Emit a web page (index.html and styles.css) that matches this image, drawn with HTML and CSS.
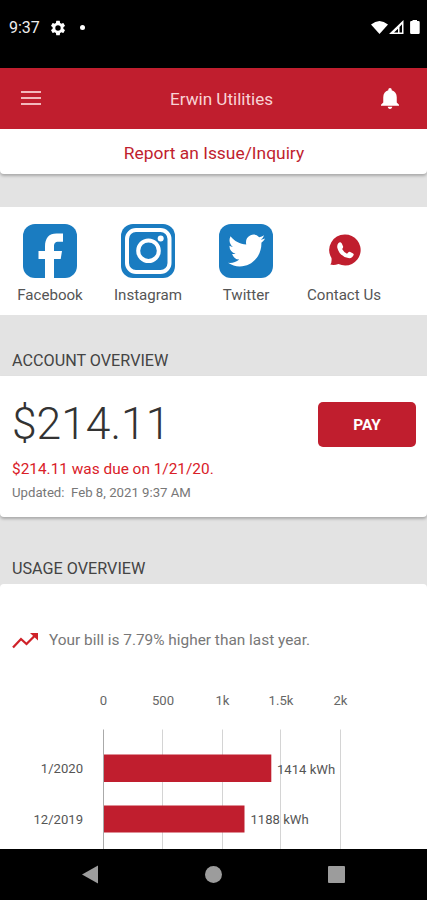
FILE: index.html
```
<!DOCTYPE html>
<html lang="en">
<head>
  <meta charset="UTF-8">
  <meta name="viewport" content="width=device-width, initial-scale=1.0">
  <title>Erwin Utilities</title>
  <link rel="stylesheet" href="styles.css">
</head>
<body>
  <div class="status-bar">
    <span class="status-bar__time">9:37</span>
    <svg class="status-bar__gear" width="18" height="18" viewBox="0 0 24 24" fill="#fff"><path d="M19.14 12.94c.04-.3.06-.61.06-.94s-.02-.64-.07-.94l2.03-1.58a.49.49 0 0 0 .12-.61l-1.92-3.32a.49.49 0 0 0-.59-.22l-2.39.96c-.5-.38-1.03-.7-1.62-.94l-.36-2.54a.48.48 0 0 0-.48-.41h-3.84a.47.47 0 0 0-.47.41l-.36 2.54c-.59.24-1.13.57-1.62.94l-2.39-.96a.48.48 0 0 0-.59.22L2.74 8.87c-.12.21-.08.47.12.61l2.03 1.58c-.05.3-.09.63-.09.94s.02.64.07.94l-2.03 1.58a.49.49 0 0 0-.12.61l1.92 3.32c.12.22.37.29.59.22l2.39-.96c.5.38 1.03.7 1.62.94l.36 2.54c.05.24.24.41.48.41h3.84c.24 0 .44-.17.47-.41l.36-2.54c.59-.24 1.13-.56 1.62-.94l2.39.96c.22.08.47 0 .59-.22l1.92-3.32a.48.48 0 0 0-.12-.61zM12 15.6a3.6 3.6 0 1 1 0-7.2 3.6 3.6 0 0 1 0 7.2z"/></svg>
    <span class="status-bar__dot"></span>
    <svg class="status-bar__signal" width="50" height="16" viewBox="0 0 50 16" fill="#fff">
      <path d="M0 4.500Q8.500-2.500 17 4.500L8.500 14z"/>
      <path fill-rule="evenodd" d="M32.500 0v14H18zM31 4.200V12.500H28.500V7zM27 8.700V12.500H23z"/>
      <path d="M41.500 1.100V0h4.500v1.100h1.500q1.200 0 1.200 1.200V12.800q0 1.200-1.200 1.200h-7.200q-1.200 0-1.200-1.200V2.300q0-1.200 1.200-1.200z"/>
    </svg>
  </div>

  <header class="header">
    <div class="header__menu"><span></span><span></span><span></span></div>
    <div class="header__title">Erwin Utilities</div>
    <svg class="header__bell" width="18" height="21" viewBox="4 2.500 16 19.500" preserveAspectRatio="none" fill="#fff"><path d="M12 22c1.100 0 2-.9 2-2h-4c0 1.100.9 2 2 2zm6-6v-5c0-3.070-1.640-5.640-4.500-6.320V4a1.500 1.500 0 0 0-3 0v.68C7.630 5.360 6 7.920 6 11v5l-2 2v1h16v-1z"/></svg>
  </header>

  <main class="content">
    <a class="card report">Report an Issue/Inquiry</a>

    <nav class="social">
      <a class="social__item">
        <svg width="54" height="54" viewBox="0 0 54 54">
          <rect width="54" height="54" rx="12" fill="#1a7cc1"/>
          <path fill="#fff" d="M22 54V35h-6.500v-8H22v-4.500C22 14 26 9.500 33.500 9.500H40v8.300h-4.500c-3.500 0-4.500 1.700-4.500 4.700V27h8l-1.300 8H31v19z"/>
        </svg>
        <span>Facebook</span>
      </a>
      <a class="social__item">
        <svg width="54" height="54" viewBox="0 0 54 54" fill="none" stroke="#fff">
          <rect width="54" height="54" rx="12" fill="#1a7cc1" stroke="none"/>
          <rect x="6" y="6" width="42.500" height="42" rx="9" stroke-width="4"/>
          <circle cx="27.500" cy="26.700" r="10.300" stroke-width="4"/>
          <circle cx="39.700" cy="14.500" r="3" fill="#fff" stroke="none"/>
        </svg>
        <span>Instagram</span>
      </a>
      <a class="social__item">
        <svg width="54" height="54" viewBox="0 0 54 54">
          <rect width="54" height="54" rx="12" fill="#1a7cc1"/>
          <path fill="#fff" transform="translate(9 7) scale(1.550 1.630)" d="M23.950 4.570a10 10 0 0 1-2.820.77 4.960 4.960 0 0 0 2.160-2.720c-.95.550-2 .950-3.130 1.180a4.920 4.920 0 0 0-8.380 4.480C7.690 8.090 4.070 6.130 1.640 3.160a4.820 4.820 0 0 0-.670 2.480c0 1.710.87 3.210 2.190 4.100a4.900 4.900 0 0 1-2.230-.62v.06a4.920 4.920 0 0 0 3.950 4.830 5 5 0 0 1-2.210.08 4.940 4.940 0 0 0 4.600 3.420A9.870 9.870 0 0 1 0 19.540a13.990 13.990 0 0 0 7.550 2.210c9.050 0 14-7.500 14-13.980 0-.21 0-.42-.02-.63a9.940 9.940 0 0 0 2.460-2.550z"/>
        </svg>
        <span>Twitter</span>
      </a>
      <a class="social__item">
        <svg width="54" height="54" viewBox="0 0 54 54">
          <path fill="#c01e2e" d="M28 10.500A15.500 15.500 0 1 1 21.500 40Q17 41.500 13.300 40.500Q15 38.500 14.500 34A15.500 15.500 0 0 1 28 10.500z"/>
          <path fill="#fff" d="M21.300 19.300q2-2 3.500.3l1.300 2.900q.3 1.200-1 2.500 1.600 3.100 4.900 4.700l1.700-1.600q.8-.6 1.600-.2l2.800 1.600q.9.500.5 1.600-1.400 3.700-5.300 3-8.900-2-11-10.300-.4-2.800 1-4.500z"/>
        </svg>
        <span>Contact Us</span>
      </a>
    </nav>

    <h2 class="heading">ACCOUNT OVERVIEW</h2>
    <section class="card account">
      <div>
        <div class="account__amount">$214.11</div>
        <div class="account__due">$214.11 was due on 1/21/20.</div>
        <div class="account__updated">Updated:&nbsp; Feb 8, 2021 9:37 AM</div>
      </div>
      <button class="account__pay">PAY</button>
    </section>

    <h2 class="heading heading--usage">USAGE OVERVIEW</h2>
    <section class="usage">
      <div class="usage__trend">
        <svg width="27" height="17" viewBox="0 0 27 17"><path d="M1 15.500L9 7l5.500 5L23 3.500" fill="none" stroke="#cf2229" stroke-width="2.300"/><path d="M18 1h8v7.500z" fill="#cf2229"/></svg>
        <span>Your bill is 7.79% higher than last year.</span>
      </div>
      <svg class="chart" width="427" height="169" viewBox="0 680 427 169">
        <g class="chart__axis">
          <text x="103.500" y="705">0</text>
          <text x="163" y="705">500</text>
          <text x="222.500" y="705">1k</text>
          <text x="281" y="705">1.5k</text>
          <text x="340.500" y="705">2k</text>
        </g>
        <path class="chart__grid" d="M162.500 729.500V849M222.500 729.500V849M280.500 729.500V849M340.500 729.500V849"/>
        <path class="chart__base" d="M103.500 729.500V849"/>
        <rect class="chart__bar" x="104" y="754.500" width="167.300" height="27.500"/>
        <rect class="chart__bar" x="104" y="805.500" width="140.500" height="27"/>
        <g class="chart__label">
          <text x="83" y="773" text-anchor="end">1/2020</text>
          <text x="83" y="823.500" text-anchor="end">12/2019</text>
          <text x="277" y="773.500">1414 kWh</text>
          <text x="250.500" y="823.500">1188 kWh</text>
        </g>
      </svg>
    </section>
  </main>

  <footer class="nav-bar">
    <svg width="17" height="19" viewBox="0 0 17 19"><path d="M0 9.500L16 .500v18z" fill="#9c9c9c"/></svg>
    <span class="nav-bar__home"></span>
    <span class="nav-bar__recent"></span>
  </footer>
</body>
</html>
```
FILE: styles.css
```
:root {
  --red: #c01e2e;
  --gray: #e3e3e3;
}

* {
  box-sizing: border-box;
}

body {
  display: flex;
  flex-direction: column;
  margin: 0;
  height: 900px;
  overflow: hidden;
  background: black;
  color: #555;
  font-family: Roboto, sans-serif;
}

svg {
  display: block;
}

.status-bar {
  display: flex;
  align-items: center;
  flex: none;
  height: 68px;
  padding: 0 6px 13px 9px;
  color: #eee;
}

.status-bar__time {
  width: 40px;
  font-size: 16px;
}

.status-bar__dot {
  width: 5px;
  height: 5px;
  margin-left: 13px;
  border-radius: 50%;
  background: white;
}

.status-bar__signal {
  margin-left: auto;
}

.header {
  display: flex;
  align-items: center;
  flex: none;
  height: 61px;
  padding: 0 28px 0 21px;
  background: var(--red);
}

.header__menu {
  display: flex;
  flex-direction: column;
  gap: 4px;
  padding-bottom: 2px;
}

.header__menu span {
  width: 20px;
  height: 2px;
  background: #f3b9bd;
}

.header__title {
  margin-left: 129px;
  color: #f8d3d5;
  font-size: 17.1px;
}

.header__bell {
  margin-left: auto;
}

.content {
  flex: 1;
  overflow: hidden;
  background: var(--gray);
}

.card {
  background: white;
  border-radius: 0 0 4px 4px;
  box-shadow: 0 2px 3px rgba(0, 0, 0, 0.25);
}

.report {
  display: block;
  height: 45px;
  padding-left: 1px;
  color: var(--red);
  font-size: 17.4px;
  line-height: 48px;
  text-align: center;
}

.social {
  display: flex;
  height: 108px;
  margin-top: 33px;
  padding: 17px 0 0 1px;
  background: white;
}

.social__item {
  display: flex;
  flex-direction: column;
  align-items: center;
  gap: 8px;
  width: 98px;
  font-size: 15.1px;
  line-height: 18px;
}

.heading {
  margin: 0;
  height: 61px;
  padding: 36px 12px 0;
  color: #444;
  font-size: 16.2px;
  font-weight: 400;
  line-height: 20px;
}

.heading--usage {
  height: 67px;
  padding-top: 42px;
}

.account {
  display: flex;
  justify-content: space-between;
  height: 141px;
  padding: 25px 11px 0 12px;
}

.account__amount {
  color: #333;
  font-size: 44.4px;
  font-weight: 300;
  line-height: 46px;
}

.account__due {
  margin-top: 12px;
  color: #d92028;
  font-size: 15.4px;
  line-height: 20px;
}

.account__updated {
  margin-top: 6px;
  color: #777;
  font-size: 13.2px;
  line-height: 16px;
}

.account__pay {
  width: 98px;
  height: 45px;
  margin-top: 1px;
  border: 0;
  border-radius: 5px;
  background: var(--red);
  color: white;
  font-family: inherit;
  font-size: 15.4px;
  font-weight: 700;
}

.usage {
  height: 265px;
  padding-top: 46px;
  border-radius: 4px 4px 0 0;
  background: white;
}

.usage__trend {
  display: flex;
  align-items: center;
  gap: 10px;
  height: 20px;
  margin-bottom: 30px;
  padding-left: 12px;
  color: #777;
  font-size: 15.4px;
}

.chart {
  font-size: 13.1px;
}

.chart__axis {
  fill: #666;
  text-anchor: middle;
}

.chart__label {
  fill: #555;
}

.chart__grid {
  stroke: #d4d4d4;
}

.chart__base {
  stroke: #aaa;
}

.chart__bar {
  fill: var(--red);
}

.nav-bar {
  display: flex;
  align-items: center;
  justify-content: space-between;
  flex: none;
  height: 51px;
  padding: 0 82px;
}

.nav-bar__home {
  width: 17px;
  height: 17px;
  border-radius: 50%;
  background: #9c9c9c;
}

.nav-bar__recent {
  width: 17px;
  height: 17px;
  border-radius: 1px;
  background: #9c9c9c;
}
```
